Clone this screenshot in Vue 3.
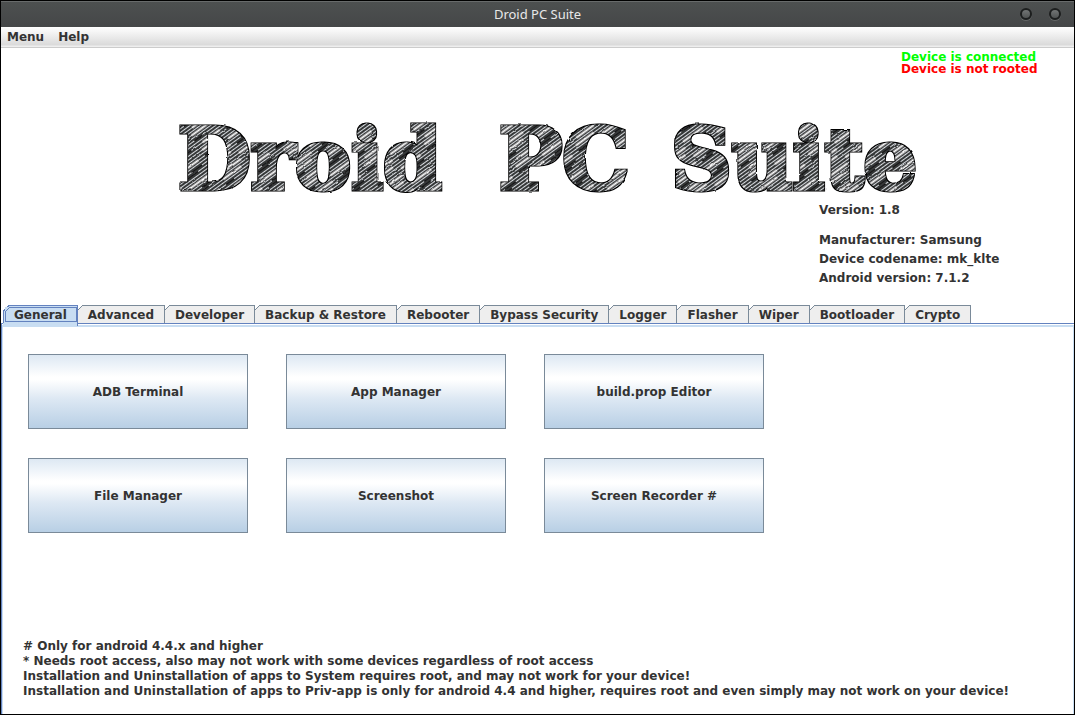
<script setup>
import { ref } from 'vue'

const menus = ['Menu', 'Help']
const tabs = ['General', 'Advanced', 'Developer', 'Backup & Restore', 'Rebooter', 'Bypass Security', 'Logger', 'Flasher', 'Wiper', 'Bootloader', 'Crypto']
const active = ref('General')
const tools = ['ADB Terminal', 'App Manager', 'build.prop Editor', 'File Manager', 'Screenshot', 'Screen Recorder #']
const notes = [
  '# Only for android 4.4.x and higher',
  '* Needs root access, also may not work with some devices regardless of root access',
  'Installation and Uninstallation of apps to System requires root, and may not work for your device!',
  'Installation and Uninstallation of apps to Priv-app is only for android 4.4 and higher, requires root and even simply may not work on your device!',
]
</script>

<template>
  <div class="window">
    <header class="titlebar">
      <span class="caption">Droid PC Suite</span>
      <div class="controls">
        <button type="button" aria-label="Minimize"></button>
        <button type="button" aria-label="Close"></button>
      </div>
    </header>
    <nav class="menubar">
      <button v-for="m in menus" :key="m" type="button">{{ m }}</button>
    </nav>
    <section class="banner">
      <div class="status">
        <p class="ok">Device is connected</p>
        <p class="bad">Device is not rooted</p>
      </div>
      <h1>
        <svg width="780" height="80">
          <defs>
            <pattern id="hatch" width="61" height="18" patternUnits="userSpaceOnUse" patternTransform="rotate(-36)">
              <rect width="61" height="18" fill="#000" />
              <path d="M0 1.5H61M0 4.5H61M0 7.5H61M0 10.5H61M0 13.5H61M0 16.5H61" stroke="#d8dce0" stroke-width="1.4" />
              <path d="M3 4.5H25M31 10.5H55M8 16.5H29" stroke="#fff" stroke-width="2" />
              <path d="M35 1.5H48M2 10.5H12M42 16.5H55" stroke="#000" stroke-width="0.9" />
            </pattern>
            <filter id="rough" x="-2%" y="-5%" width="104%" height="110%">
              <feTurbulence type="fractalNoise" baseFrequency="0.12" numOctaves="2" seed="4" result="n" />
              <feMorphology in="SourceAlpha" operator="dilate" radius="1" result="edge" />
              <feMerge result="lettering">
                <feMergeNode in="edge" />
                <feMergeNode in="SourceGraphic" />
              </feMerge>
              <feDisplacementMap in="lettering" in2="n" scale="2" xChannelSelector="R" yChannelSelector="G" />
            </filter>
          </defs>
          <g filter="url(#rough)">
            <text x="2" y="70">Droid</text>
            <text x="323" y="70">PC</text>
            <text x="495" y="70">Suite</text>
          </g>
        </svg>
      </h1>
      <div class="info">
        <p class="version">Version: 1.8</p>
        <p>Manufacturer: Samsung</p>
        <p>Device codename: mk_klte</p>
        <p>Android version: 7.1.2</p>
      </div>
    </section>
    <div class="tabs" role="tablist">
      <button
        v-for="t in tabs"
        :key="t"
        type="button"
        role="tab"
        :aria-selected="t === active"
        :class="{ active: t === active }"
        @click="active = t"
      >{{ t }}</button>
    </div>
    <main class="panel">
      <div class="grid">
        <button v-for="t in tools" :key="t" type="button">{{ t }}</button>
      </div>
      <div class="notes">
        <p v-for="n in notes" :key="n">{{ n }}</p>
      </div>
    </main>
  </div>
</template>

<style>
body { margin: 0; background: #fff; }
</style>

<style scoped>
.window {
  box-sizing: border-box;
  min-height: 100vh;
  display: flex;
  flex-direction: column;
  border: 1px solid #000;
  background: #fff;
  color: #333;
  font: bold 12px/15px "DejaVu Sans", sans-serif;
}
button { font: inherit; color: inherit; margin: 0; padding: 0; border: 0; background: none; white-space: nowrap; }
p, h1 { margin: 0; }
.titlebar {
  display: grid;
  grid-template-columns: 1fr auto 1fr;
  align-items: center;
  height: 26px;
  box-sizing: border-box;
  border-top: 1px solid #686b6b;
  background: linear-gradient(#4d5050, #454748);
  color: #e8e8e8;
  font: 13px/18px "Noto Sans", sans-serif;
}
.caption { grid-column: 2; padding-bottom: 2px; }
.controls { display: flex; justify-content: flex-end; gap: 17px; padding: 0 13px 2px 0; }
.controls button {
  box-sizing: border-box;
  width: 12px;
  height: 12px;
  border: 2px solid #1c1e1e;
  border-radius: 50%;
  background: linear-gradient(#727575, #505353);
  box-shadow: 0 1px 0 #656868;
}
.menubar {
  display: flex;
  gap: 14px;
  height: 21px;
  box-sizing: border-box;
  padding: 0 6px;
  border-bottom: 1px solid #ccc;
  background: linear-gradient(#fff, #dadada 18px, #eee 19px);
}
.banner { padding: 3px 0 17px; }
.status { width: 136px; margin: 0 37px 0 auto; line-height: 12px; white-space: nowrap; }
.ok { color: #0f0; }
.bad { color: #f00; }
h1 { margin-top: 44px; padding-left: 175px; height: 82px; }
h1 svg { display: block; overflow: visible; }
h1 text {
  font: bold 84px "DejaVu Serif", serif;
  fill: url(#hatch);
  stroke: url(#hatch);
  stroke-width: 3px;
}
.info { width: 255px; margin-left: auto; line-height: 19px; }
.version { margin-bottom: 11px; }
.tabs { display: flex; padding-left: 2px; height: 18px; }
.tabs button {
  position: relative;
  padding: 2px 10px 0;
  border-right: 1px solid #7a8a99;
  background:
    linear-gradient(#7a8a99, #7a8a99) 5px 0 / 100% 1px no-repeat,
    linear-gradient(135deg, #fff 3px, #7a8a99 3px, #7a8a99 4px, #eee 4px);
  line-height: 16px;
}
.tabs button.active {
  height: 21px;
  padding: 2px 10px 3px 11px;
  border-right-color: #6382bf;
  background:
    linear-gradient(#6382bf, #6382bf) 6px 0 / 100% 1px no-repeat,
    linear-gradient(#6382bf, #6382bf) 0 6px / 1px 12px no-repeat,
    linear-gradient(135deg, #fff 4px, #6382bf 4px, #6382bf 5px, #c8ddf2 5px);
  z-index: 1;
}
.tabs button.active::after {
  content: "";
  position: absolute;
  z-index: -1;
  top: 2px;
  left: 2px;
  right: 0;
  bottom: 4px;
  border: solid #6382bf;
  border-width: 0 1px 1px 0;
  background:
    linear-gradient(#6382bf, #6382bf) 5px 0 / 100% 1px no-repeat,
    linear-gradient(#6382bf, #6382bf) 0 5px / 1px 100% no-repeat,
    linear-gradient(135deg, #c8ddf2 3px, #6382bf 3px, #6382bf 4px, #c8ddf2 4px);
}
.panel {
  flex: 1;
  display: flex;
  flex-direction: column;
  justify-content: space-between;
  border: 1px solid #6382bf;
  border-bottom: 0;
  border-right: 0;
  box-shadow: inset 0 1px #fff, inset 1px 3px #c8ddf2, inset -1px 0 #c8ddf2;
  padding: 30px 26px 15px;
}
.grid {
  display: grid;
  grid-template-columns: repeat(3, 220px);
  grid-auto-rows: 75px;
  gap: 29px 38px;
}
.grid button {
  padding-top: 1px;
  border: 1px solid #7a8a99;
  background: linear-gradient(#dde8f3, #fff 30%, #fff 34%, #dde8f3 60%, #b8cfe5);
}
.notes { margin-left: -5px; }
</style>
